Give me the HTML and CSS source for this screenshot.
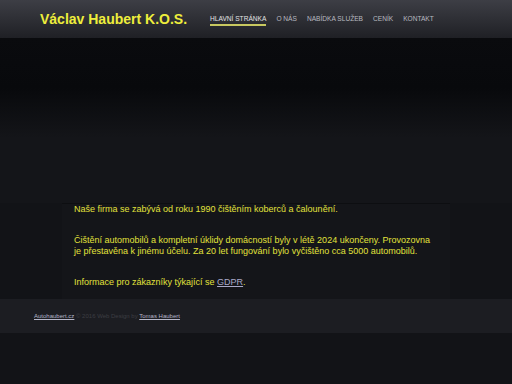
FILE: index.html
```html
<!DOCTYPE html>
<html lang="cs">

<head>
  <meta charset="UTF-8">
  <meta name="viewport" content="width=device-width, initial-scale=1.0">
  <title>Václav Haubert K.O.S.</title>
  <link rel="stylesheet" href="styles.css">
</head>

<body>
  <header class="top">
    <h1 class="brand">Václav Haubert K.O.S.</h1>
    <nav class="menu">
      <a class="active" href="#">Hlavní stránka</a>
      <a href="#">O nás</a>
      <a href="#">Nabídka služeb</a>
      <a href="#">Ceník</a>
      <a href="#">Kontakt</a>
    </nav>
  </header>
  <div class="hero"></div>
  <main class="content">
    <p>Naše firma se zabývá od roku 1990 čištěním koberců a čalounění.</p>
    <p>Čištění automobilů a kompletní úklidy domácností byly v létě 2024 ukončeny. Provozovna je přestavěna k jinému účelu. Za 20 let fungování bylo vyčištěno cca 5000 automobilů.</p>
    <p>Informace pro zákazníky týkající se <a href="#">GDPR</a>.</p>
  </main>
  <footer class="foot">
    <a href="#">Autohaubert.cz</a> © 2016 Web Design by <a href="#">Tomas Haubert</a>
  </footer>
</body>

</html>
```

FILE: styles.css
```css
/* header gray, dark body, yellow text */
body {
  margin: 0;
  background-color: #121317;
  font-family: "Liberation Sans", Arial, sans-serif;
}

.top {
  height: 38px;
  display: flex;
  align-items: center;
  background: linear-gradient(#3d3e45, #1f2025);
}

.brand {
  margin: 0 0 0 40px;
  font-size: 14px;
  font-weight: bold;
  color: #eeee3c;
}

.menu {
  display: flex;
  gap: 10px;
  margin-left: 23px;
}

.menu a {
  font-size: 6.6px;
  text-transform: uppercase;
  color: #b9bac0;
  text-decoration: none;
  padding: 2px 0;
}

.menu a.active {
  color: #e4e4e4;
  border-bottom: 2px solid #c8c860;
}

.hero {
  height: 165px;
  background: linear-gradient(#0a0b0e 0, #08090c 50px, #141519 100px);
}

.content {
  background-color: #141519;
  margin: 0 62px;
  padding: 0 12px 11px 12px;
  border-top: 1px solid #0d0e11;
  font-size: 9px;
  line-height: 11px;
  color: #e2e23c;
}

.content p {
  margin: 0 0 20px;
}

.content p:last-child {
  margin-bottom: 0;
}

.content a {
  color: #a9a9c8;
}

.foot {
  background-color: #1c1d22;
  height: 34px;
  padding-left: 34px;
  font-size: 6px;
  line-height: 34px;
  color: #3c3d43;
}

.foot a {
  color: #b5b6c8;
}
```
